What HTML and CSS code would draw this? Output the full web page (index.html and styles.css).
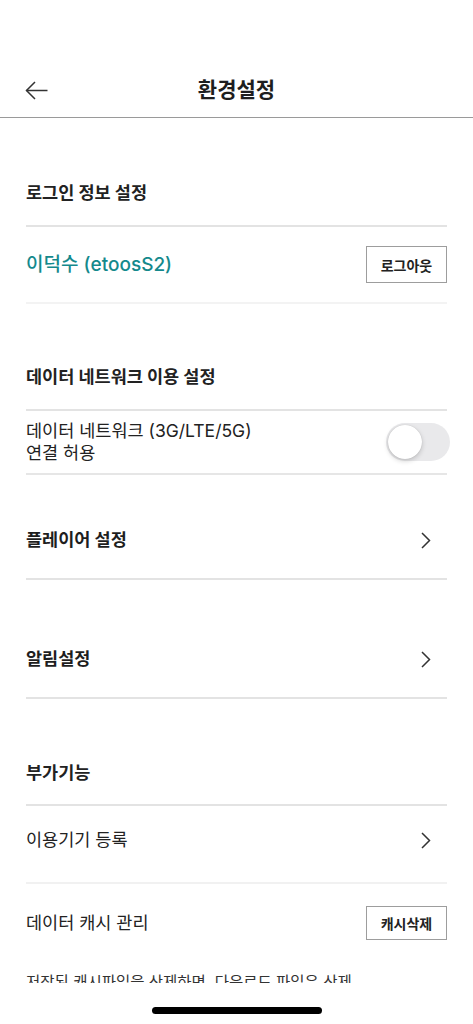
FILE: index.html
```html
<!DOCTYPE html>
<html lang="ko">
<head>
    <meta charset="UTF-8">
    <meta name="viewport" content="width=device-width, initial-scale=1.0">
    <title>환경설정</title>
    <link rel="stylesheet" href="styles.css">
</head>
<body>

<div class="screen">
    <div class="status-bar"></div>

    <header class="top-bar">
        <button class="back-btn" aria-label="뒤로">
            <svg width="23" height="19" viewBox="0 0 23 19">
                <line x1="1.5" y1="9.5" x2="22.5" y2="9.5" stroke="#333" stroke-width="1.5"/>
                <polyline points="10,1 1.5,9.5 10,18" fill="none" stroke="#333" stroke-width="1.5"/>
            </svg>
        </button>
        <h1>환경설정</h1>
    </header>

    <main class="content">
        <!-- 로그인 정보 -->
        <h2 class="group-title first">로그인 정보 설정</h2>
        <div class="row account-row">
            <span class="account-name">이덕수 (etoosS2)</span>
            <button class="box-btn">로그아웃</button>
        </div>

        <!-- 데이터 네트워크 -->
        <h2 class="group-title second">데이터 네트워크 이용 설정</h2>
        <div class="row toggle-row">
            <span class="row-text">데이터 네트워크 (3G/LTE/5G)<br>연결 허용</span>
            <span class="toggle"><span class="knob"></span></span>
        </div>

        <div class="row link-row player-row">
            <span class="row-title">플레이어 설정</span>
            <svg class="chevron" width="10" height="17" viewBox="0 0 10 17">
                <polyline points="1,1 8.5,8.5 1,16" fill="none" stroke="#333" stroke-width="1.5"/>
            </svg>
        </div>

        <div class="row link-row alarm-row">
            <span class="row-title">알림설정</span>
            <svg class="chevron" width="10" height="17" viewBox="0 0 10 17">
                <polyline points="1,1 8.5,8.5 1,16" fill="none" stroke="#333" stroke-width="1.5"/>
            </svg>
        </div>

        <!-- 부가기능 -->
        <h2 class="group-title third">부가기능</h2>
        <div class="row link-row device-row">
            <span class="row-text">이용기기 등록</span>
            <svg class="chevron" width="10" height="17" viewBox="0 0 10 17">
                <polyline points="1,1 8.5,8.5 1,16" fill="none" stroke="#333" stroke-width="1.5"/>
            </svg>
        </div>

        <div class="row cache-row">
            <span class="row-text">데이터 캐시 관리</span>
            <button class="box-btn small">캐시삭제</button>
        </div>
        <p class="note">저장된 캐시파일을 삭제하면, 다운로드 파일은 삭제되지 않습니다.</p>
    </main>

    <div class="home-area">
        <span class="home-indicator"></span>
    </div>
</div>

</body>
</html>
```

FILE: styles.css
```css
/* Basic Reset */
* {
    margin: 0;
    padding: 0;
    box-sizing: border-box;
}

body {
    font-family: Inter, "Noto Sans CJK KR", "Noto Sans", sans-serif;
    background: #fff;
    color: #222;
}

.screen {
    width: 473px;
    height: 1024px;
    display: flex;
    flex-direction: column;
    overflow: hidden;
}

.status-bar {
    height: 62px;
    flex: none;
}

/* Header */
.top-bar {
    height: 56px;
    flex: none;
    display: flex;
    align-items: center;
    justify-content: center;
    position: relative;
    border-bottom: 1px solid #9a9a9a;
}

.top-bar h1 {
    font-size: 21px;
    font-weight: 700;
    line-height: 28px;
    color: #1e1e1e;
}

.back-btn {
    position: absolute;
    left: 25px;
    top: 19px;
    border: none;
    background: none;
    display: flex;
}

/* Content */
.content {
    height: 865px;
    flex: none;
    overflow: hidden;
    padding: 0 26px;
}

.group-title {
    font-size: 17.5px;
    font-weight: 700;
    line-height: 24px;
    color: #222;
    padding-bottom: 20px;
    border-bottom: 2px solid #e3e3e3;
}

.group-title.first {
    padding-top: 63px;
}

.group-title.second {
    padding-top: 61px;
}

.group-title.third {
    padding-top: 62px;
    padding-bottom: 19px;
}

.row {
    display: flex;
    align-items: center;
    justify-content: space-between;
}

.row-text {
    font-size: 17.5px;
    line-height: 22px;
    color: #222;
}

.row-title {
    font-size: 17.5px;
    font-weight: 700;
    line-height: 24px;
    color: #1e1e1e;
}

.account-row {
    height: 77px;
    border-bottom: 2px solid #f3f3f3;
}

.account-name {
    font-size: 19px;
    font-weight: 500;
    color: #14898c;
    line-height: 26px;
}

.box-btn {
    width: 81px;
    height: 37px;
    border: 1.5px solid #9d9d9d;
    background: #fff;
    font-family: inherit;
    font-size: 14px;
    font-weight: 700;
    color: #222;
}

.box-btn.small {
    height: 34px;
}

.toggle-row {
    padding: 9px 0;
    border-bottom: 2px solid #e6e6e6;
}

.toggle {
    width: 64px;
    height: 38px;
    border-radius: 19px;
    background: #e9e9eb;
    margin-right: -3px;
    padding: 2px;
    display: flex;
}

.knob {
    width: 34px;
    height: 34px;
    border-radius: 50%;
    background: #fff;
    box-shadow: 0 2px 5px rgba(0, 0, 0, 0.18), 0 0 1px rgba(0, 0, 0, 0.2);
}

.link-row {
    border-bottom: 2px solid #e3e3e3;
}

.chevron {
    margin-right: 16px;
}

.player-row {
    padding: 53px 0 26px;
}

.alarm-row {
    padding: 67px 0 26px;
}

.device-row {
    padding: 22px 0 30px;
    border-bottom-color: #f1f1f1;
}

.device-row .row-text {
    line-height: 24px;
}

.cache-row {
    padding: 22px 0;
}

.note {
    margin-top: 10px;
    max-width: 335px;
    font-size: 15.5px;
    line-height: 22px;
    color: #333;
}

/* Home indicator */
.home-area {
    flex: 1;
    display: flex;
    justify-content: center;
    padding-top: 24px;
}

.home-indicator {
    width: 170px;
    height: 7px;
    border-radius: 4px;
    background: #000;
}
```
